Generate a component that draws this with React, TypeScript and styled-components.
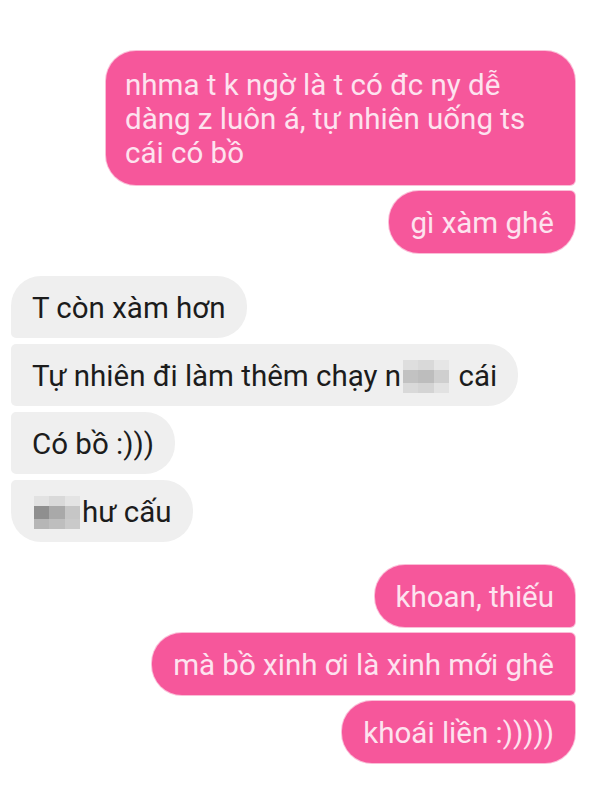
import React from "react";
import styled, { createGlobalStyle, css } from "styled-components";

const Global = createGlobalStyle`
  html, body { margin: 0; padding: 0; background: #ffffff; }
  body { font-family: Roboto, "Liberation Sans", Arial, sans-serif; }
`;

type Side = "me" | "them";
type Pos = "single" | "first" | "middle" | "last";

const Page = styled.div`
  width: 600px;
  height: 796px;
  box-sizing: border-box;
  padding: 51px 25px 0 11px;
  display: flex;
  flex-direction: column;
  gap: 23px;
  background: #ffffff;
  overflow: hidden;
`;

const Group = styled.div<{ $side: Side }>`
  display: flex;
  flex-direction: column;
  gap: 6px;
  align-items: ${(p) => (p.$side === "me" ? "flex-end" : "flex-start")};
`;

const BIG = 30;
const SMALL = 5;

const radius = (side: Side, pos: Pos) => {
  const top = pos === "single" || pos === "first" ? BIG : SMALL;
  const bottom = pos === "single" || pos === "last" ? BIG : SMALL;
  if (side === "me") {
    return css`
      border-radius: ${BIG}px ${top}px ${bottom}px ${BIG}px;
    `;
  }
  return css`
    border-radius: ${top}px ${BIG}px ${BIG}px ${bottom}px;
  `;
};

const Bubble = styled.div<{ $side: Side; $pos: Pos; $width?: number }>`
  box-sizing: border-box;
  height: ${(p) => (p.$width ? "auto" : "62px")};
  padding: 15px 21px 13px;
  font-size: 29.5px;
  line-height: 34px;
  white-space: nowrap;
  ${(p) => (p.$width ? `width: ${p.$width}px;` : "")}
  ${(p) =>
    p.$side === "me"
      ? css`
          background: #f6579b;
          color: #fde3ef;
          box-shadow: 0 0 0 1px rgba(240, 70, 140, 0.35);
        `
      : css`
          background: #efefef;
          color: #1c1c1c;
        `}
  ${(p) => radius(p.$side, p.$pos)}
`;

const TallBubble = styled(Bubble)`
  padding-top: 17px;
  padding-bottom: 15px;
  padding-left: 19px;
  white-space: normal;
`;

const Censor = styled.span<{ $w: number }>`
  display: inline-grid;
  grid-template-columns: repeat(3, 1fr);
  grid-template-rows: 10px 13px 10px;
  width: ${(p) => p.$w}px;
  height: 33px;
  vertical-align: top;
  margin: 1px 2px 0;
`;

const Cell = styled.span<{ $c: string }>`
  display: block;
  background: ${(p) => p.$c};
`;

const Mosaic: React.FC<{ w: number; colors: string[] }> = ({ w, colors }) => (
  <Censor $w={w}>
    {colors.map((c, i) => (
      <Cell key={i} $c={c} />
    ))}
  </Censor>
);

export default function App() {
  return (
    <>
      <Global />
      <Page>
        <Group $side="me">
          <TallBubble $side="me" $pos="first" $width={469}>
            nhma t k ngờ là t có đc ny dễ
            <br />
            dàng z luôn á, tự nhiên uống ts
            <br />
            cái có bồ
          </TallBubble>
          <Bubble $side="me" $pos="last">
            gì xàm ghê
          </Bubble>
        </Group>

        <Group $side="them">
          <Bubble $side="them" $pos="first">
            T còn xàm hơn
          </Bubble>
          <Bubble $side="them" $pos="middle">
            Tự nhiên đi làm thêm chạy n
            <Mosaic
              w={46}
              colors={[
                "#dedede", "#d9d9d9", "#e6e6e6",
                "#c2c2c2", "#bdbdbd", "#cfcfcf",
                "#d9d9d9", "#d4d4d4", "#e2e2e2",
              ]}
            />
            {" "}cái
          </Bubble>
          <Bubble $side="them" $pos="middle">
            Có bồ :)))
          </Bubble>
          <Bubble $side="them" $pos="last">
            <Mosaic
              w={46}
              colors={[
                "#e2e2e2", "#d9d9d9", "#e4e4e4",
                "#8f8f8f", "#a9a9a9", "#c6c6c6",
                "#b6b6b6", "#bebebe", "#cacaca",
              ]}
            />
            hư cấu
          </Bubble>
        </Group>

        <Group $side="me">
          <Bubble $side="me" $pos="first">
            khoan, thiếu
          </Bubble>
          <Bubble $side="me" $pos="middle">
            mà bồ xinh ơi là xinh mới ghê
          </Bubble>
          <Bubble $side="me" $pos="last">
            khoái liền :)))))
          </Bubble>
        </Group>
      </Page>
    </>
  );
}
